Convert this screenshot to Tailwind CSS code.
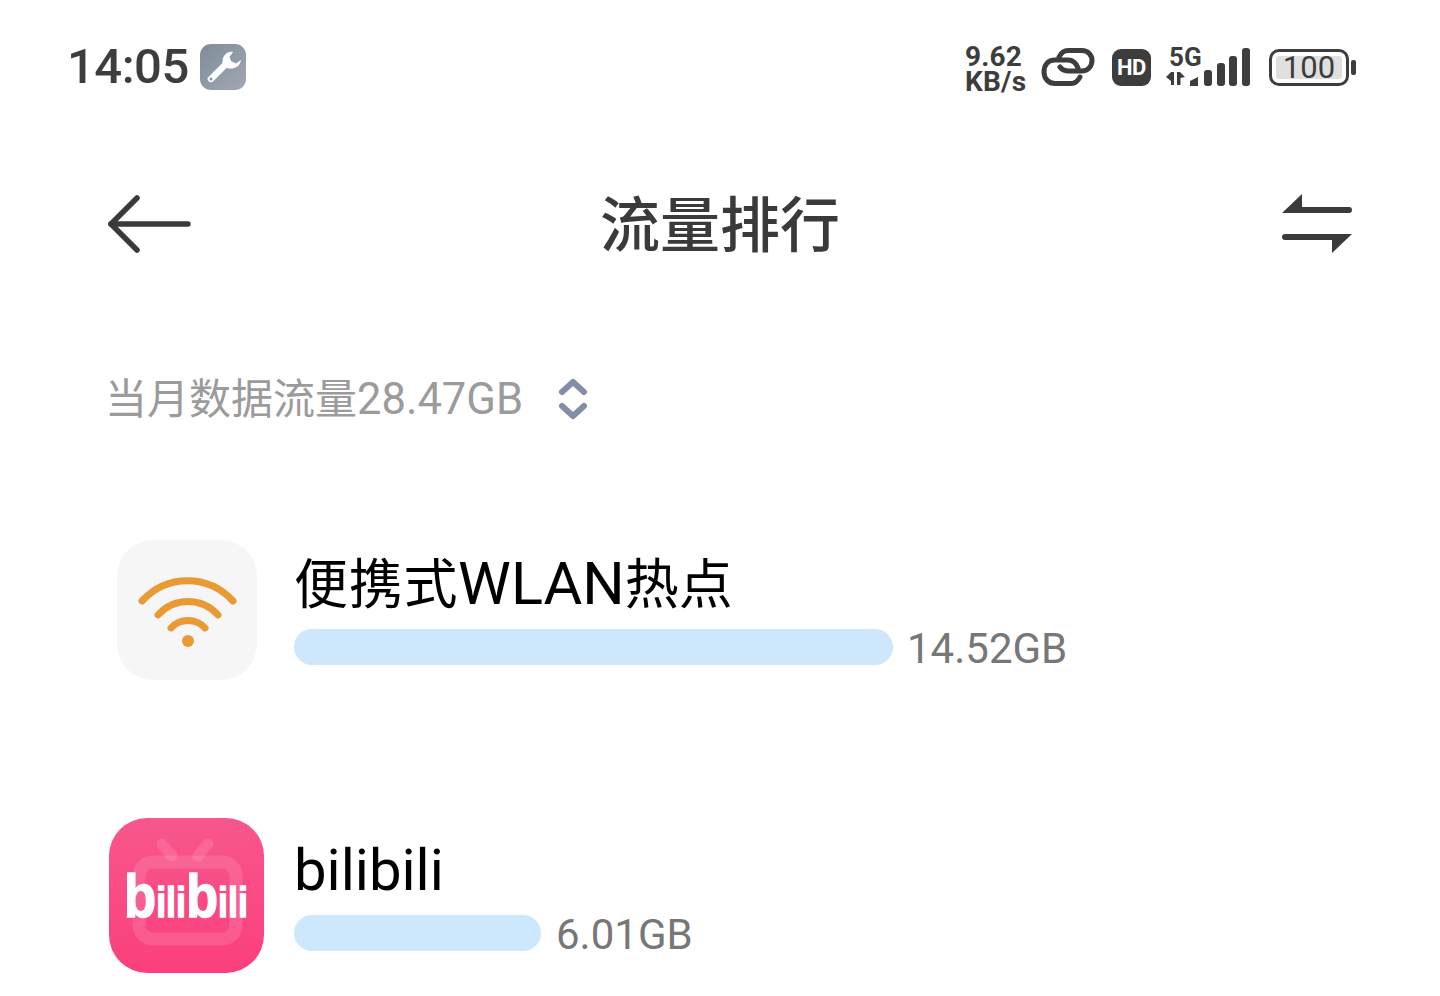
<!DOCTYPE html>
<html lang="zh-CN">
<head>
    <meta charset="UTF-8">
    <meta name="viewport" content="width=device-width, initial-scale=1.0">
    <title>流量排行</title>
    <script src="https://cdn.jsdelivr.net/npm/@tailwindcss/browser@4"></script>
</head>
<body class="bg-white h-[996px] overflow-hidden font-['Roboto','Noto_Sans_CJK_SC',sans-serif]">
    <!-- status bar -->
    <div class="h-[134px] pl-[67px] pr-[91px] flex items-center justify-between text-[#3d3d3d]">
        <div class="flex items-center gap-[11px]">
            <span class="text-[49px] leading-none font-medium tracking-[-0.5px] -mt-[2px]">14:05</span>
            <svg class="w-[46px] h-[46px] -mt-[1px]" viewBox="0 0 46 46">
                <defs>
                    <linearGradient id="toolBg" x1="0" y1="0" x2="1" y2="1">
                        <stop offset="0" stop-color="#7f8c9c"/>
                        <stop offset="1" stop-color="#a0a8b1"/>
                    </linearGradient>
                </defs>
                <rect width="46" height="46" rx="11" fill="url(#toolBg)"/>
                <path d="M11 35 L26 20" stroke="#fff" stroke-width="6.5" stroke-linecap="round"/>
                <circle cx="11" cy="35" r="1.5" fill="#8b95a2"/>
                <path d="M33 8 C27 7 22 12 22.5 19 L27 24 C33 26 40 23 41 16 L36 19.5 L31 17 L29.5 13 Z" fill="#fff"/>
            </svg>
        </div>
        <div class="flex items-center">
            <div class="w-[65px] text-[28px] leading-[25px] font-bold mt-[3px] tracking-[0.2px]">
                <div>9.62</div>
                <div>KB/s</div>
            </div>
            <svg class="w-[54px] h-[40px] ml-[11px]" viewBox="0 0 54 40" fill="none" stroke="#3d3d3d" stroke-width="5" stroke-linecap="round">
                <path d="M37 21 C35 16 32 13 27 13 H14 C7 13 3 18 3 25 C3 32 8 36.5 14 36.5 H30 C34 36.5 37 34 39 30"/>
                <path d="M18 10 C20 6 23 3.5 27 3.5 H41 C47 3.5 51 8 51 13.5 C51 19 47 24 41 24 H28 C24 24 21 23 19 20"/>
            </svg>
            <div class="ml-[17px] w-[39px] h-[37px] rounded-[9px] bg-[#3d3d3d] text-white text-[22px] font-bold flex items-center justify-center tracking-[-0.5px]">HD</div>
            <div class="ml-[15px] -mt-[8px] w-[86px] h-[46px] relative">
                <span class="absolute left-[3px] top-[4px] text-[26px] leading-none font-bold">5G</span>
                <svg class="w-[86px] h-[46px]" viewBox="0 0 86 46" fill="#3d3d3d">
                    <path d="M0 37 L5 32 H8 V45 H5 V41 Z M11 32 H14 L19 37 L14.5 38 V45 H11 Z"/>
                    <path d="M24 41 L32 37 V46 H24 Z"/>
                    <rect x="38" y="30" width="8" height="16" rx="3"/>
                    <rect x="51" y="23" width="8" height="23" rx="3"/>
                    <rect x="63" y="16" width="8" height="30" rx="3"/>
                    <rect x="76" y="8" width="8" height="38" rx="3"/>
                </svg>
            </div>
            <div class="ml-[17px] w-[80px] h-[37px] rounded-[10px] border-[3.5px] border-[#3d3d3d] p-[4px] relative">
                <div class="h-full rounded-[3px] bg-[#e0e0e0] flex items-center justify-center text-[31px] leading-none">100</div>
                <div class="absolute -right-[10px] top-[8px] w-[5px] h-[15px] rounded-[2px] bg-[#3d3d3d]"></div>
            </div>
        </div>
    </div>

    <!-- title bar -->
    <div class="h-[110px] mt-[35px] pl-[87px] pr-[87px] grid grid-cols-[1fr_auto_1fr] items-center text-[#3a3a3a]">
        <svg class="ml-[21px] w-[84px] h-[60px]" viewBox="0 0 84 60" fill="none" stroke="#3a3a3a" stroke-width="5.5" stroke-linecap="round" stroke-linejoin="round">
            <path d="M3 30 H80"/>
            <path d="M29 4 L3 30 L29 56"/>
        </svg>
        <h1 class="text-[60px] leading-none font-medium pt-[6px]">流量排行</h1>
        <svg class="justify-self-end w-[72px] h-[62px]" viewBox="0 0 72 62" fill="#3a3a3a">
            <path d="M1 20 L21 1 V14 H68 A3 3 0 0 1 68 20 Z"/>
            <path d="M71 41 L51 60 V47 H4 A3 3 0 0 1 4 41 Z"/>
        </svg>
    </div>

    <!-- monthly total -->
    <div class="mt-[91px] pl-[105px] flex items-center text-[#9b9b9b] h-[60px]">
        <span class="text-[42px] leading-none">当月数据流量<span class="text-[43.5px]">28.47GB</span></span>
        <svg class="ml-[35px] -mt-[2px] w-[30px] h-[42px]" viewBox="0 0 30 42" fill="none" stroke="#838da5" stroke-width="6" stroke-linecap="round" stroke-linejoin="round">
            <path d="M4 14 L15 4 L26 14"/>
            <path d="M4 28 L15 38 L26 28"/>
        </svg>
    </div>

    <!-- app list -->
    <div class="pl-[108px]">
        <div class="mt-[110px] h-[140px] flex items-start">
            <div class="w-[157px] flex justify-center shrink-0">
                <div class="w-[140px] h-[140px] rounded-[36px] bg-[#f6f6f6] flex items-center justify-center">
                    <svg class="w-[100px] h-[76px]" viewBox="0 0 100 76" fill="none" stroke="#ea9a35" stroke-width="7" stroke-linecap="round">
                        <path d="M5 29 C30 2 71 2 96 29"/>
                        <path d="M21 43 C37 25 65 25 81 43"/>
                        <path d="M34 56 C43 46 59 46 68 56"/>
                        <circle cx="51" cy="69" r="6" fill="#ea9a35" stroke="none"/>
                    </svg>
                </div>
            </div>
            <div class="ml-[29px] pt-[15px]">
                <div class="h-[60px] text-[54px] leading-[58px] text-black whitespace-nowrap"><span class="tracking-[0.7px]">便携式</span><span class="text-[59.5px] leading-none">WLAN</span>热点</div>
                <div class="flex items-center mt-[14px] h-[36px]">
                    <div class="w-[599px] h-[36px] rounded-full bg-[#cde7fc]"></div>
                    <span class="ml-[14px] mt-[4px] text-[42px] leading-none text-[#777]">14.52GB</span>
                </div>
            </div>
        </div>

        <div class="mt-[138px] h-[155px] flex items-start">
            <div class="w-[157px] flex justify-center shrink-0">
                <svg class="w-[155px] h-[155px]" viewBox="0 0 155 155">
                    <defs>
                        <linearGradient id="biliBg" x1="0" y1="0" x2="0" y2="1">
                            <stop offset="0" stop-color="#f7578c"/>
                            <stop offset="1" stop-color="#fb3f7c"/>
                        </linearGradient>
                    </defs>
                    <rect width="155" height="155" rx="38" fill="url(#biliBg)"/>
                    <g fill="none" stroke="#fff" stroke-opacity="0.12" stroke-linecap="round">
                        <path d="M53 26 L63 38 M99 26 L89 38" stroke-width="11"/>
                        <rect x="30" y="44" width="97" height="77" rx="14" stroke-width="13"/>
                    </g>
                    <text transform="translate(15 99) scale(0.85 1)" fill="#fff" stroke="#fff" stroke-width="1.5" font-family="Liberation Sans" font-weight="700"><tspan font-size="62">b</tspan><tspan font-size="42">ili</tspan><tspan font-size="62">b</tspan><tspan font-size="42">ili</tspan></text>
                </svg>
            </div>
            <div class="ml-[29px] pt-[22px]">
                <div class="text-[58px] leading-[60px] text-black">bilibili</div>
                <div class="flex items-center mt-[15px] h-[36px]">
                    <div class="w-[247px] h-[36px] rounded-full bg-[#cde7fc]"></div>
                    <span class="ml-[15px] mt-[4px] text-[42px] leading-none text-[#777]">6.01GB</span>
                </div>
            </div>
        </div>
    </div>
</body>
</html>
